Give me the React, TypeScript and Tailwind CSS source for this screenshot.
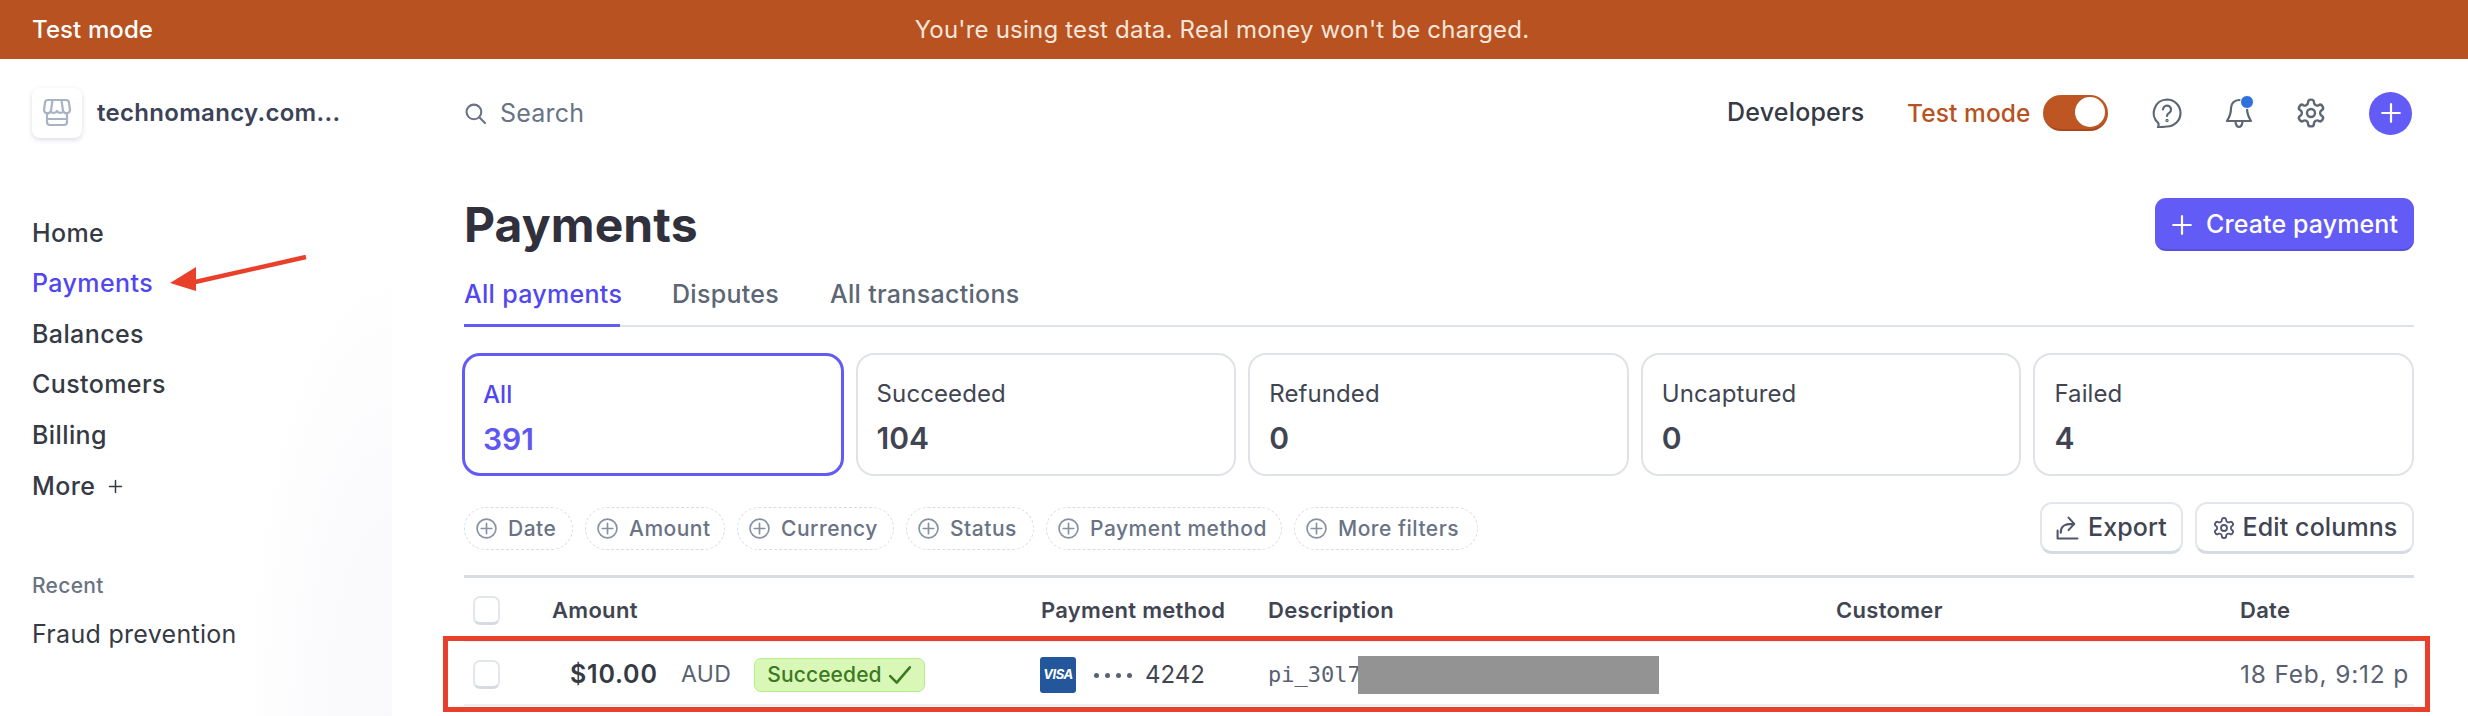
import React from "react";

const Plus = ({ className = "" }: { className?: string }) => (
  <svg viewBox="0 0 20 20" className={className} fill="none" stroke="currentColor" strokeWidth="2" strokeLinecap="round">
    <path d="M10 2v16M2 10h16" />
  </svg>
);

const PlusCircle = () => (
  <svg viewBox="0 0 20 20" className="w-[21px] h-[21px] shrink-0" fill="none" stroke="#8792a2" strokeWidth="1.6" strokeLinecap="round">
    <circle cx="10" cy="10" r="9" />
    <path d="M10 5v10M5 10h10" />
  </svg>
);

const Gear = ({ className = "" }: { className?: string }) => (
  <svg viewBox="0 0 24 24" className={className} fill="none" stroke="currentColor" strokeWidth="1.8" strokeLinecap="round" strokeLinejoin="round">
    <path d="M12.22 2h-.44a2 2 0 0 0-2 2v.18a2 2 0 0 1-1 1.73l-.43.25a2 2 0 0 1-2 0l-.15-.08a2 2 0 0 0-2.73.73l-.22.38a2 2 0 0 0 .73 2.73l.15.1a2 2 0 0 1 1 1.72v.51a2 2 0 0 1-1 1.74l-.15.09a2 2 0 0 0-.73 2.73l.22.38a2 2 0 0 0 2.73.73l.15-.08a2 2 0 0 1 2 0l.43.25a2 2 0 0 1 1 1.73V20a2 2 0 0 0 2 2h.44a2 2 0 0 0 2-2v-.18a2 2 0 0 1 1-1.73l.43-.25a2 2 0 0 1 2 0l.15.08a2 2 0 0 0 2.73-.73l.22-.39a2 2 0 0 0-.73-2.73l-.15-.08a2 2 0 0 1-1-1.74v-.5a2 2 0 0 1 1-1.74l.15-.09a2 2 0 0 0 .73-2.73l-.22-.38a2 2 0 0 0-2.73-.73l-.15.08a2 2 0 0 1-2 0l-.43-.25a2 2 0 0 1-1-1.73V4a2 2 0 0 0-2-2z" />
    <circle cx="12" cy="12" r="3" />
  </svg>
);

const Check = () => (
  <div className="w-[27px] h-[29px] shrink-0 rounded-[7px] bg-white border-2 border-[#e3e7ec] border-b-[3px] border-b-[#d5dbe1]" />
);

const nav = ["Home", "Payments", "Balances", "Customers", "Billing"];
const cards = [
  ["All", "391"],
  ["Succeeded", "104"],
  ["Refunded", "0"],
  ["Uncaptured", "0"],
  ["Failed", "4"],
];
const chips: [string, string][] = [
  ["Date", "w-[109px]"],
  ["Amount", "w-[140px]"],
  ["Currency", "w-[157px]"],
  ["Status", "w-[128px]"],
  ["Payment method", "w-[236px]"],
  ["More filters", "w-[184px]"],
];

export default function App() {
  return (
    <div className="relative w-[2468px] h-[716px] overflow-hidden bg-white font-['Inter',sans-serif] text-[#30313d]">
      <div className="relative h-[59px] bg-[#b85220] flex items-center justify-center text-white text-[24px]">
        <span className="absolute left-[32px] font-medium tracking-[0.1px]">Test mode</span>
        <span className="text-[#f6e6dc] tracking-[0.2px] ml-[-24px]">You're using test data. Real money won't be charged.</span>
      </div>

      <div className="flex h-[657px]">
        <aside className="w-[392px] mr-[72px] shrink-0 bg-[radial-gradient(ellipse_150px_460px_at_100%_100%,#f9f9fc_0%,#fbfbfd_55%,#ffffff_100%)]">
          <div className="h-[108px] flex items-center pl-[32px]">
            <div className="w-[50px] h-[50px] rounded-[8px] bg-white shadow-[0_2px_5px_rgba(60,66,87,0.18)] flex items-center justify-center">
              <svg viewBox="0 0 30 30" className="w-[30px] h-[30px]" fill="none" stroke="#a8b3c4" strokeWidth="2.2" strokeLinejoin="round" strokeLinecap="round">
                <path d="M6 2h18a3 3 0 0 1 3 3l1 7a3.5 3.5 0 0 1-6.700 1.200A3.600 3.600 0 0 1 15 13a3.600 3.600 0 0 1-6.300.2A3.500 3.500 0 0 1 2 12l1-7a3 3 0 0 1 3-3z" />
                <path d="M10.500 2 9 13M19.500 2 21 13M5 15v9a3 3 0 0 0 3 3h14a3 3 0 0 0 3-3v-9M5 21h20" />
              </svg>
            </div>
            <span className="ml-[15px] text-[24px] tracking-[0.3px] font-semibold text-[#3c4257]">technomancy.com...</span>
          </div>
          <nav className="mt-[41px] flex flex-col text-[25px] tracking-[0.4px] font-medium">
            {nav.map((n) => (
              <div key={n} className={`h-[50.6px] pl-[32px] flex items-center ${n === "Payments" ? "text-[#5147f0]" : "text-[#353a44]"}`}>
                {n}
              </div>
            ))}
            <div className="h-[50.6px] pl-[32px] flex items-center gap-[13px] text-[#353a44]">
              More <Plus className="w-[15px] h-[15px]" />
            </div>
          </nav>
          <div className="mt-[59px] pl-[32px] text-[21px] tracking-[0.3px] font-medium text-[#6a7383] h-[30px] flex items-center">Recent</div>
          <div className="mt-[19px] pl-[32px] text-[25px] tracking-[0.3px] text-[#353a44] h-[30px] flex items-center">Fraud prevention</div>
        </aside>

        <main className="w-[1950px] shrink-0">
          <div className="h-[108px] flex items-center">
            <svg viewBox="0 0 20 20" className="w-[21px] h-[21px] ml-[1px]" fill="none" stroke="#687385" strokeWidth="2" strokeLinecap="round">
              <circle cx="8.500" cy="8.500" r="7" />
              <path d="M13.800 13.800 19 19" />
            </svg>
            <span className="ml-[14px] pt-[1px] text-[25px] tracking-[0.2px] text-[#687385]">Search</span>
            <div className="ml-auto flex items-center">
              <span className="text-[25px] tracking-[0.2px] font-medium text-[#353a44] w-[180px]">Developers</span>
              <span className="text-[24.5px] tracking-[0.1px] font-medium text-[#b85220] w-[136px]">Test mode</span>
              <div className="w-[65px] h-[36px] rounded-full bg-[#bd5622] border-b-2 border-b-[#a8481b] flex items-center justify-end pr-[3px]">
                <div className="w-[30px] h-[30px] rounded-full bg-white" />
              </div>
              <svg viewBox="0 0 30 30" className="w-[30px] h-[30px] ml-[44px]" fill="none" stroke="#5c6675" strokeWidth="2.200" strokeLinecap="round" strokeLinejoin="round">
                <path d="M15 1.500a13.500 13.500 0 0 1 0 27c-2 0-5 .5-9 1 .6-1.500.8-3.200.2-4.500A13.500 13.500 0 0 1 15 1.500z" />
                <path d="M11 11.500a4 4 0 1 1 6.200 3.400c-1.400.9-2.200 1.700-2.200 3.100" />
                <circle cx="15" cy="22.500" r=".6" />
              </svg>
              <div className="relative w-[28px] h-[31px] ml-[43px]">
                <svg viewBox="0 0 28 31" className="w-[28px] h-[31px]" fill="none" stroke="#5c6675" strokeWidth="2.200" strokeLinecap="round" strokeLinejoin="round">
                  <path d="M14 2a8 8 0 0 0-8 8c0 7-2 10-4 13h24c-2-3-4-6-4-13a8 8 0 0 0-8-8zM10.500 24c.5 3 2 5 3.500 5s3-2 3.500-5" />
                </svg>
                <div className="absolute top-[-3px] right-[-1px] w-[14px] h-[14px] rounded-full bg-[#2e70dd] border border-white" />
              </div>
              <Gear className="w-[32px] h-[32px] ml-[42px] text-[#5c6675]" />
              <div className="w-[43px] h-[43px] ml-[42px] mr-[2px] rounded-full bg-[#635bf5] text-white flex items-center justify-center">
                <Plus className="w-[22px] h-[22px]" />
              </div>
            </div>
          </div>

          <div className="mt-[31px] h-[53px] flex items-center justify-between">
            <h1 className="text-[48px] font-bold leading-none text-[#30313d] tracking-[0.1px]">Payments</h1>
            <button className="w-[259px] h-[53px] pt-[2px] rounded-[11px] bg-[#635bf5] border-b-2 border-b-[#5850dc] text-white text-[25px] tracking-[0.1px] font-medium flex items-center justify-center gap-[13px]">
              <Plus className="w-[22px] h-[22px]" /> Create payment
            </button>
          </div>

          <div className="mt-[26px] flex whitespace-nowrap text-[25px] leading-[35px] tracking-[0.3px] font-medium border-b-2 border-[#dfe3e8] h-[50px]">
            <div className="w-[156px] h-[50px] shrink-0 text-[#5147f0] border-b-[3px] border-[#635bf5] mr-[52px]">All payments</div>
            <div className="w-[158px] shrink-0 text-[#5c6675]">Disputes</div>
            <div className="text-[#5c6675]">All transactions</div>
          </div>

          <div className="mt-[26px] flex gap-[12px]">
            {cards.map(([l, c], i) => (
              <div key={l} className={`flex-1 h-[123px] rounded-[18px] pt-[24px] ${i === 0 ? "border-[3px] border-[#635bf5] pl-[18px] ml-[-2px]" : "border-2 border-[#dfe3e8] pl-[19px]"}`}>
                <div className={`text-[24px] tracking-[0.1px] leading-[30px] ${i === 0 ? "text-[#5147f0] font-medium" : "text-[#414552]"}`}>{l}</div>
                <div className={`mt-[12px] text-[30px] leading-[34px] font-semibold ${i === 0 ? "text-[#5f57f2]" : "text-[#414552]"}`}>{c}</div>
              </div>
            ))}
          </div>

          <div className="mt-[26px] h-[52px] flex items-center">
            <div className="flex gap-[12px]">
              {chips.map(([t, w]) => (
                <div key={t} className={`${w} h-[43px] pt-[1px] rounded-full border border-dashed border-[#d9dde3] flex items-center gap-[11px] pl-[11px] text-[21px] tracking-[0.5px] font-medium text-[#687385]`}>
                  <PlusCircle />
                  {t}
                </div>
              ))}
            </div>
            <div className="ml-auto flex gap-[12px]">
              <button className="w-[143px] h-[52px] rounded-[12px] bg-white border-2 border-[#e3e7ec] border-b-[3px] border-b-[#d5dbe1] flex items-center justify-center gap-[9px] text-[25px] tracking-[0.1px] font-medium text-[#414552]">
                <svg viewBox="0 0 22 24" className="w-[23px] h-[25px]" fill="none" stroke="#4f566b" strokeWidth="2" strokeLinecap="round" strokeLinejoin="round">
                  <path d="M1.500 15v7.500h19M4.500 17c0-6 3-8.500 11-8.500M12 2.500l5.500 6-5.500 6" />
                </svg>
                Export
              </button>
              <button className="w-[219px] h-[52px] rounded-[12px] bg-white border-2 border-[#e3e7ec] border-b-[3px] border-b-[#d5dbe1] flex items-center justify-center gap-[7px] text-[25px] tracking-[0.1px] font-medium text-[#414552]">
                <Gear className="w-[24px] h-[24px] text-[#4f566b]" />
                Edit columns
              </button>
            </div>
          </div>

          <div className="mt-[21px] h-[3px] bg-[#d8dde3]" />

          <div className="h-[64px] pt-[3px] flex items-center text-[22px] tracking-[0.3px] font-semibold text-[#414552] border-b-2 border-[#eceef1]">
            <div className="w-[88px] pl-[9px] shrink-0"><Check /></div>
            <div className="w-[489px] shrink-0">Amount</div>
            <div className="w-[227px] shrink-0">Payment method</div>
            <div className="w-[568px] shrink-0">Description</div>
            <div className="w-[404px] shrink-0">Customer</div>
            <div>Date</div>
          </div>

          <div className="h-[64px] pt-[3px] flex items-center border-b-2 border-[#eceef1]">
            <div className="w-[106px] pl-[9px] shrink-0"><Check /></div>
            <div className="w-[111px] shrink-0 text-[25px] tracking-[0.8px] font-semibold text-[#353a44]">$10.00</div>
            <div className="w-[73px] shrink-0 text-[23px] tracking-[0.3px] text-[#596171]">AUD</div>
            <div className="w-[171px] h-[34px] shrink-0 rounded-[7px] bg-[#d9f8b8] border border-[#b4ec85] flex items-center justify-center gap-[6px] text-[21px] tracking-[0.1px] font-medium text-[#3c7a22]">
              Succeeded
              <svg viewBox="0 0 22 18" className="w-[24px] h-[20px]" fill="none" stroke="#3c7a22" strokeWidth="2.400" strokeLinecap="round" strokeLinejoin="round">
                <path d="M2 10l6 6L20 2" />
              </svg>
            </div>
            <div className="w-[115px] shrink-0" />
            <div className="w-[36px] h-[36px] shrink-0 rounded-[3px] bg-[#24569c] flex items-center justify-center text-white text-[13px] font-bold italic tracking-[-0.5px]">VISA</div>
            <div className="w-[192px] shrink-0 pl-[18px] flex items-center text-[#414552] text-[24px]">
              <span className="flex gap-[6px] w-[51px] pt-[2px]">
                <span className="w-[5px] h-[5px] rounded-full bg-[#596171]" />
                <span className="w-[5px] h-[5px] rounded-full bg-[#596171]" />
                <span className="w-[5px] h-[5px] rounded-full bg-[#596171]" />
                <span className="w-[5px] h-[5px] rounded-full bg-[#596171]" />
              </span>
              4242
            </div>
            <div className="w-[90px] shrink-0 whitespace-nowrap font-['DejaVu_Sans_Mono',monospace] text-[22px] text-[#596171]">pi_30l7</div>
            <div className="relative w-[301px] h-[38px] shrink-0 bg-[#939393]" />
            <div className="w-[581px] shrink-0" />
            <div className="w-[169px] shrink-0 overflow-hidden whitespace-nowrap text-[24.5px] tracking-[0.8px] text-[#596171]">18 Feb, 9:12 pm</div>
          </div>
        </main>
      </div>

      <div className="absolute left-[443px] top-[636px] w-[1987px] h-[76px] border-[5px] border-[#e8402a]" />
      <svg viewBox="0 0 160 50" className="absolute left-[165px] top-[250px] w-[160px] h-[50px]" fill="none">
        <path d="M141 7 L30 32" stroke="#e8402a" strokeWidth="4.500" />
        <path d="M5 33 L31 17 L31 41 Z" fill="#e8402a" />
      </svg>
    </div>
  );
}
